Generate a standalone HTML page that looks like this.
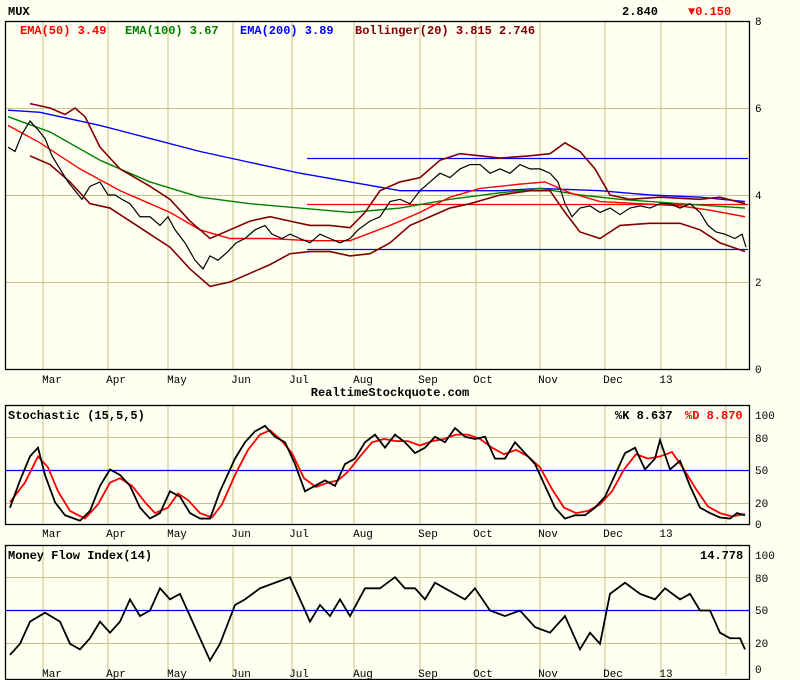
<!DOCTYPE html>
<html><head><meta charset="utf-8"><style>
html,body{margin:0;padding:0;background:#fffff2;}
svg{display:block;font-family:"Liberation Mono",monospace;font-weight:bold;font-size:12px;}
</style></head><body>
<svg width="800" height="680" viewBox="0 0 800 680" xmlns="http://www.w3.org/2000/svg">
<rect width="800" height="680" fill="#fffff2"/>
<!-- grids -->
<g stroke="#c4c48c" stroke-width="1">
<path d="M43 22V369M108 22V369M168 22V369M233 22V369M292 22V369M354 22V369M420 22V369M476 22V369M540 22V369M605 22V369M661 22V369M726 22V369M5 108.5H749M5 195.5H749M5 282.5H749"/>
<path d="M43 406V524M108 406V524M168 406V524M233 406V524M292 406V524M354 406V524M420 406V524M476 406V524M540 406V524M605 406V524M661 406V524M726 406V524M5 437.5H749M5 503.5H749"/>
<path d="M43 546V676M108 546V676M168 546V676M233 546V676M292 546V676M354 546V676M420 546V676M476 546V676M540 546V676M605 546V676M661 546V676M726 546V676M5 577.5H749M5 643.5H749"/>
</g>
<g fill="none" stroke="#000" stroke-width="1.3">
<rect x="5.5" y="21.5" width="744" height="348"/>
<rect x="5.5" y="405.5" width="744" height="119"/>
<rect x="5.5" y="545.5" width="744" height="134"/>
</g>
<!-- horizontal lines -->
<path d="M307 158.5H748M307 249.5H748M5 470.5H749M5 610.5H749" stroke="#0000ff" stroke-width="1.3"/>
<path d="M307 204.5H748" stroke="#ff0000" stroke-width="1.3"/>
<!-- main panel -->
<g transform="translate(0,369) scale(1,-43.5)" fill="none">
<polyline vector-effect="non-scaling-stroke" stroke="#0000ff" stroke-width="1.4" points="8,5.95 40,5.9 100,5.6 150,5.3 200,5.0 250,4.75 300,4.5 350,4.3 400,4.1 450,4.1 500,4.1 540,4.15 600,4.1 650,4.0 700,3.95 745,3.85"/>
<polyline vector-effect="non-scaling-stroke" stroke="#008000" stroke-width="1.4" points="8,5.8 50,5.45 100,4.8 150,4.3 200,3.95 250,3.8 300,3.7 350,3.6 400,3.7 450,3.9 500,4.05 540,4.15 580,4.0 620,3.9 680,3.8 745,3.7"/>
<polyline vector-effect="non-scaling-stroke" stroke="#ff0000" stroke-width="1.4" points="8,5.6 40,5.2 80,4.6 120,4.1 170,3.6 200,3.2 230,3.0 270,3.0 310,2.95 350,2.95 390,3.3 420,3.6 450,3.95 480,4.15 520,4.25 545,4.3 570,4.05 600,3.85 640,3.8 680,3.75 710,3.65 745,3.5"/>
<polyline vector-effect="non-scaling-stroke" stroke="#800000" stroke-width="1.6" points="30,6.1 50,6.0 65,5.85 75,6.0 85,5.8 100,5.1 120,4.6 150,4.2 170,3.9 190,3.4 210,3.0 230,3.2 250,3.4 270,3.5 290,3.4 310,3.3 330,3.3 350,3.25 365,3.6 380,4.1 400,4.3 420,4.4 440,4.8 460,4.95 480,4.9 500,4.85 530,4.9 550,4.95 565,5.2 580,5.0 595,4.6 610,4.0 630,3.9 660,3.95 700,3.9 720,3.95 745,3.8"/>
<polyline vector-effect="non-scaling-stroke" stroke="#800000" stroke-width="1.6" points="30,4.9 50,4.7 70,4.3 90,3.8 110,3.7 130,3.4 150,3.1 170,2.8 190,2.3 210,1.9 230,2.0 250,2.2 270,2.4 290,2.65 310,2.7 330,2.7 350,2.6 370,2.65 390,2.9 410,3.3 430,3.5 450,3.7 470,3.8 500,4.0 530,4.1 550,4.1 565,3.6 580,3.15 600,3.0 620,3.3 650,3.35 680,3.35 700,3.2 720,2.9 745,2.7"/>
<polyline vector-effect="non-scaling-stroke" stroke="#000" stroke-width="1.2" points="8,5.1 15,5.0 22,5.4 30,5.7 38,5.5 45,5.3 52,4.9 60,4.6 68,4.3 75,4.1 82,3.9 90,4.2 100,4.3 108,4.0 115,4.0 122,3.9 130,3.8 140,3.5 150,3.5 160,3.3 168,3.5 175,3.2 185,2.9 195,2.5 203,2.3 210,2.6 218,2.5 228,2.7 236,2.9 245,3.0 255,3.2 265,3.3 272,3.1 282,3.0 290,3.1 300,3.0 310,2.9 320,3.1 330,3.0 340,2.9 350,3.0 358,3.2 370,3.4 380,3.5 390,3.85 400,3.9 410,3.8 420,4.1 430,4.3 440,4.5 450,4.4 460,4.6 470,4.7 480,4.7 490,4.5 500,4.6 510,4.5 520,4.7 530,4.6 540,4.6 550,4.5 558,4.3 565,3.8 572,3.5 580,3.7 590,3.75 600,3.6 610,3.7 620,3.55 630,3.7 640,3.75 650,3.7 660,3.8 670,3.8 680,3.7 690,3.8 700,3.6 708,3.3 716,3.15 725,3.1 735,3.0 742,3.1 746,2.8"/>
</g>
<!-- stochastic -->
<g transform="translate(0,524) scale(1,-1.09)" fill="none">
<polyline vector-effect="non-scaling-stroke" stroke="#ff0000" stroke-width="1.8" points="10,20 25,38 38,62 48,52 58,30 70,12 85,5 98,18 110,38 120,42 132,35 145,20 155,10 168,15 178,28 188,22 200,10 212,6 222,18 235,45 248,68 260,82 270,86 280,78 292,65 304,42 316,34 328,38 338,40 348,48 360,62 372,75 384,78 396,76 408,76 420,72 432,76 444,78 456,82 468,82 480,78 492,70 504,64 516,68 528,62 540,52 552,32 564,15 576,10 588,12 600,18 612,30 624,50 636,64 648,60 660,62 672,66 684,50 696,32 708,16 720,10 732,7 745,9"/>
<polyline vector-effect="non-scaling-stroke" stroke="#000" stroke-width="1.8" points="10,15 20,40 30,62 38,70 45,45 55,20 65,8 80,3 90,12 100,35 110,50 120,45 130,35 140,15 150,5 160,10 170,30 180,25 190,10 200,5 210,5 220,30 235,60 245,75 255,85 265,90 275,80 285,75 295,55 305,30 315,35 325,40 335,35 345,55 355,60 365,75 375,82 385,70 395,82 405,75 415,65 425,70 435,80 445,75 455,88 465,80 475,78 485,80 495,60 505,60 515,75 525,65 535,55 545,35 555,15 565,5 575,8 585,8 595,15 605,25 615,45 625,65 635,70 645,50 655,60 660,77 670,50 680,58 690,35 700,15 710,10 720,6 730,5 737,10 745,8"/>
</g>
<!-- MFI -->
<g transform="translate(0,666) scale(1,-1.11)" fill="none">
<polyline vector-effect="non-scaling-stroke" stroke="#000" stroke-width="1.8" points="10,10 20,20 30,40 45,48 60,40 70,20 80,15 90,25 100,40 110,30 120,40 130,60 140,45 150,50 160,70 170,60 180,65 195,35 210,5 220,20 235,55 245,60 260,70 275,75 290,80 300,60 310,40 320,55 330,45 340,60 350,45 365,70 380,70 395,80 405,70 415,70 425,60 435,75 445,70 455,65 465,60 475,70 490,50 505,45 520,50 535,35 550,30 565,45 580,15 590,30 600,20 610,65 625,75 640,65 655,60 665,70 680,60 690,65 700,50 710,50 720,30 730,25 740,25 745,15"/>
</g>
<!-- texts -->
<text x="8" y="15">MUX</text>
<text x="622" y="15">2.840</text>
<text x="688" y="15" fill="#ff0000">▼0.150</text>
<text x="20" y="34" fill="#ff0000">EMA(50) 3.49</text>
<text x="125" y="34" fill="#008000">EMA(100) 3.67</text>
<text x="240" y="34" fill="#0000ff">EMA(200) 3.89</text>
<text x="355" y="34" fill="#800000">Bollinger(20) 3.815 2.746</text>
<g font-weight="normal" font-size="11">
<text x="755" y="25">8</text><text x="755" y="112">6</text><text x="755" y="199">4</text><text x="755" y="286">2</text><text x="755" y="373">0</text>
<text x="755" y="419">100</text><text x="755" y="442">80</text><text x="755" y="474">50</text><text x="755" y="507">20</text><text x="755" y="528">0</text>
<text x="755" y="559">100</text><text x="755" y="582">80</text><text x="755" y="614">50</text><text x="755" y="647">20</text><text x="755" y="673">0</text>
</g>
<g font-weight="normal" font-size="11" text-anchor="middle">
<text x="52" y="383">Mar</text><text x="116" y="383">Apr</text><text x="177" y="383">May</text><text x="241" y="383">Jun</text><text x="299" y="383">Jul</text><text x="363" y="383">Aug</text><text x="428" y="383">Sep</text><text x="483" y="383">Oct</text><text x="548" y="383">Nov</text><text x="613" y="383">Dec</text><text x="666" y="383">13</text>
<text x="52" y="537">Mar</text><text x="116" y="537">Apr</text><text x="177" y="537">May</text><text x="241" y="537">Jun</text><text x="299" y="537">Jul</text><text x="363" y="537">Aug</text><text x="428" y="537">Sep</text><text x="483" y="537">Oct</text><text x="548" y="537">Nov</text><text x="613" y="537">Dec</text><text x="666" y="537">13</text>
<text x="52" y="677">Mar</text><text x="116" y="677">Apr</text><text x="177" y="677">May</text><text x="241" y="677">Jun</text><text x="299" y="677">Jul</text><text x="363" y="677">Aug</text><text x="428" y="677">Sep</text><text x="483" y="677">Oct</text><text x="548" y="677">Nov</text><text x="613" y="677">Dec</text><text x="666" y="677">13</text>
</g>
<text x="390" y="396" text-anchor="middle">RealtimeStockquote.com</text>
<text x="8" y="419">Stochastic (15,5,5)</text>
<text x="615" y="419">%K 8.637</text>
<text x="685" y="419" fill="#ff0000">%D 8.870</text>
<text x="8" y="559">Money Flow Index(14)</text>
<text x="700" y="559">14.778</text>
</svg>
</body></html>
